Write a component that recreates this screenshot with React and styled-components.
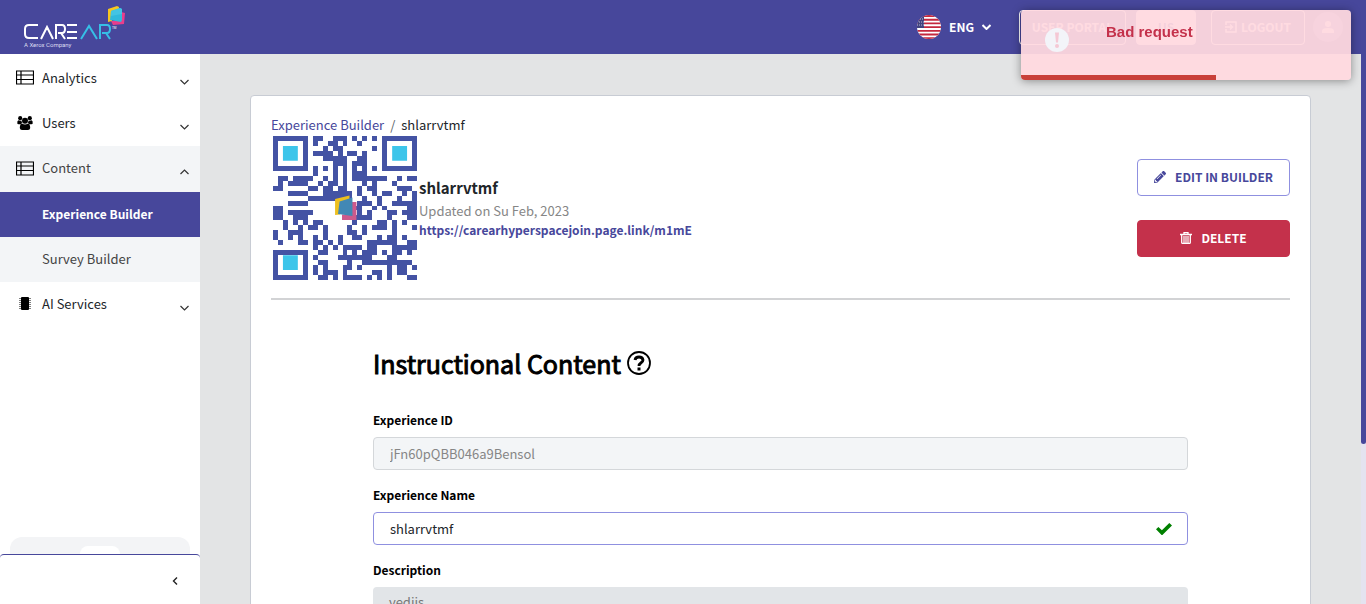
import React from 'react';
import styled, { createGlobalStyle, css } from 'styled-components';
import { FaPencilAlt } from 'react-icons/fa';

const GlobalStyle = createGlobalStyle`
  * { box-sizing: border-box; }
  html, body { margin: 0; height: 100%; }
  body {
    background: #e3e4e5;
    color: #000;
    font: 13px/20px "Noto Sans CJK SC", "Noto Sans", sans-serif;
    overflow: hidden;
  }
  #root { height: 100%; }
  button, input, textarea { font: inherit; }
`;

const INDIGO = '#47479b';

const strong = css`
  font-size: 12px;
  font-weight: 700;
`;

const Page = styled.div`
  display: grid;
  grid-template: 54px minmax(0, 1fr) / 200px minmax(0, 1fr) 5px;
  height: 100vh;
`;

const TopBar = styled.header`
  grid-column: 1 / 3;
  display: flex;
  align-items: center;
  justify-content: space-between;
  padding: 0 18px 0 23px;
  background: ${INDIGO};
  color: #fff;
`;

const TopActions = styled.div`
  display: flex;
  align-items: center;
`;

const Language = styled.button`
  display: flex;
  align-items: center;
  gap: 8px;
  margin-right: 28px;
  padding: 0;
  border: 0;
  background: none;
  color: #fff;
  ${strong}
`;

const OutlineButton = styled.button`
  display: flex;
  align-items: center;
  justify-content: center;
  gap: 4px;
  width: ${(p) => p.$width}px;
  height: 35px;
  margin-right: ${(p) => p.$after}px;
  padding: 0;
  border: 1px solid #fff;
  border-radius: 4px;
  background: ${(p) => (p.$filled ? '#fff' : 'transparent')};
  color: ${(p) => (p.$filled ? INDIGO : '#fff')};
  ${strong}
`;

const Avatar = styled.button`
  display: grid;
  place-items: center;
  width: 30px;
  height: 30px;
  padding: 0;
  border: 0;
  border-radius: 50%;
  background: #7c7cc0;
`;

const ScrollTrack = styled.div`
  grid-column: 3;
  grid-row: 1 / 3;
  background: #e4e3f0;
`;

const ScrollThumb = styled.div`
  height: 73.5%;
  background: ${INDIGO};
  border-radius: 0 0 3px 3px;
`;

const Sidebar = styled.aside`
  display: flex;
  flex-direction: column;
  justify-content: space-between;
  min-height: 0;
  background: #fff;
`;

const Menu = styled.nav`
  display: flex;
  flex-direction: column;
  padding-top: 2px;
`;

const rowBase = css`
  display: flex;
  align-items: center;
  border: 0;
  text-align: left;
  text-decoration: none;
`;

const MenuRow = styled.button`
  ${rowBase}
  height: ${(p) => (p.$open ? 46 : 45)}px;
  padding: 0 11px 2px 15px;
  background: ${(p) => (p.$open ? '#f3f5f7' : '#fff')};
  color: ${(p) => (p.$open ? '#444' : '#212529')};
`;

const MenuIcon = styled.span`
  display: flex;
  justify-content: center;
  width: 20px;
  margin-right: 7px;
  color: #000;
`;

const MenuText = styled.span`
  flex: 1;
`;

const Chevron = styled.svg`
  margin-top: 8px;
`;

const SubLink = styled.a`
  ${rowBase}
  height: 45px;
  padding: 0 0 2px 42px;
  background: ${(p) => (p.$active ? INDIGO : '#f3f5f7')};
  color: ${(p) => (p.$active ? '#fff' : '#444')};
  ${(p) => p.$active && strong}
`;

const PromoPeek = styled.div`
  display: flex;
  justify-content: center;
  align-items: flex-end;
  height: 17px;
  margin: 0 10px;
  border-radius: 12px 12px 0 0;
  background: #f3f4f6;
`;

const PromoBadge = styled.div`
  width: 40px;
  height: 8px;
  border-radius: 12px 12px 0 0;
  background: #fff;
`;

const Collapse = styled.button`
  display: flex;
  justify-content: flex-end;
  align-items: center;
  width: 100%;
  height: 50px;
  padding: 2px 22px 0 0;
  border: 0;
  border-top: 1px solid ${INDIGO};
  border-radius: 4px 4px 0 0;
  background: #fff;
`;

const Main = styled.main`
  min-height: 0;
  overflow: hidden;
  padding: 41px 50px 0;
`;

const Card = styled.section`
  min-height: 700px;
  padding: 19px 20px;
  border: 1px solid #c8ccd4;
  border-radius: 4px;
  background: #fff;
`;

const Breadcrumb = styled.nav`
  display: flex;
  gap: 6px;
  margin-bottom: 1px;
  color: #5a6268;
`;

const Crumb = styled.a`
  color: ${INDIGO};
  text-decoration: none;
`;

const Current = styled.span`
  color: #212529;
`;

const Summary = styled.div`
  display: flex;
  align-items: center;
  height: 164px;
  border-bottom: 2px solid #d2d3d5;
`;

const QrFrame = styled.div`
  align-self: flex-start;
  height: 148px;
  padding: 0 2px;
`;

const Details = styled.div`
  flex: 1;
  padding-bottom: 20px;
`;

const Name = styled.h2`
  margin: 0;
  color: #212529;
  font-size: 15px;
  font-weight: 700;
  line-height: 26px;
`;

const Updated = styled.p`
  margin: 0;
  color: #868686;
  line-height: 19px;
`;

const ShareLink = styled.a`
  display: block;
  color: ${INDIGO};
  line-height: 19px;
  text-decoration: none;
  ${strong}
`;

const Actions = styled.div`
  display: flex;
  flex-direction: column;
  gap: 24px;
  width: 153px;
  padding-bottom: 19px;
`;

const ActionButton = styled.button`
  display: flex;
  align-items: center;
  justify-content: center;
  gap: 9px;
  height: 37px;
  padding: 0;
  border: 1px solid ${(p) => (p.$danger ? '#c4314b' : '#8f90e0')};
  border-radius: 4px;
  background: ${(p) => (p.$danger ? '#c4314b' : '#fff')};
  color: ${(p) => (p.$danger ? '#fff' : INDIGO)};
  ${strong}
`;

const Form = styled.form`
  width: 80%;
  margin: 0 auto;
  padding-top: 43px;
`;

const Title = styled.h1`
  display: flex;
  align-items: center;
  gap: 6px;
  margin: 0 0 27px;
  font-size: 25px;
  font-weight: 400;
  line-height: 40px;
  -webkit-text-stroke: 1px currentColor;
`;

const Field = styled.div`
  display: flex;
  flex-direction: column;
  gap: 7px;
  margin-bottom: 15px;
`;

const Label = styled.label`
  ${strong}
`;

const InputBox = styled.div`
  display: flex;
  align-items: center;
  height: 33px;
  padding: 0 15px 0 0;
  border: 1px solid ${(p) => (p.$valid ? '#8f90e0' : '#d4d7da')};
  border-radius: 4px;
  background: ${(p) => (p.$valid ? '#fff' : '#f3f5f7')};
`;

const Input = styled.input`
  flex: 1;
  min-width: 0;
  padding: 0 16px;
  border: 0;
  outline: 0;
  background: transparent;
  color: ${(p) => (p.disabled ? '#868686' : '#212529')};
`;

const TextArea = styled.textarea`
  height: 90px;
  padding: 5px 16px;
  border: 0;
  border-radius: 4px;
  background: #e2e5e8;
  color: #777;
  resize: none;
`;

const Toast = styled.div`
  position: fixed;
  top: 10px;
  right: 15px;
  width: 330px;
  height: 70px;
  display: flex;
  flex-direction: column;
  justify-content: space-between;
  overflow: hidden;
  border-radius: 4px;
  background: rgba(255, 217, 223, 0.94);
  box-shadow: 0 1px 10px rgba(0, 0, 0, 0.4);
`;

const ToastBody = styled.div`
  display: flex;
  align-items: flex-start;
  gap: 37px;
  padding: 11px 24px 0;
  color: #c4314b;
  font: 700 15px/22px "Liberation Sans", Arial, sans-serif;
`;

const ToastIcon = styled.svg`
  margin-top: 7px;
`;

const Progress = styled.div`
  width: 195px;
  height: 5px;
  background: #c9403a;
`;

function Logo() {
  return (
    <svg width="104" height="46" viewBox="0 0 104 46" role="img" aria-label="CareAR, a Xerox Company">
      <path d="m85 5 9-3 2 1v2l-7 3v9l-4 1z" fill="#f7c51e" />
      <path d="m98 8 4 1-1 11-11 1-2-4 10-1z" fill="#e83e8c" />
      <path d="m88 7 9-3 2 1v11l-1 2-11-2z" fill="#30b9dc" />
      <path d="m88 7 9-3 2 1v5l-11 2z" fill="#43c4e3" />
      <g fill="none" stroke="#fff" strokeWidth="2">
        <path d="M15 21H6q-4 0-4 4v5q0 4 4 4h9M18 35l6-12 6 12M33 35V21h6q3 0 3 4t-3 4h-4m3 0 4 6M54 21H44M54 28H44M54 34H44" />
      </g>
      <g fill="none" stroke="#36bfe6" strokeWidth="2">
        <path d="m58 35 8-13 8 13M77 35V21h7q3 0 3 4t-3 4h-5m4 0 4 6" />
      </g>
      <text x="89" y="25" fontSize="3" fill="#fff" fontFamily="Roboto, sans-serif">TM</text>
      <text x="1" y="43" fontSize="6" fill="#dcdcf0" fontFamily="Roboto, sans-serif">A Xerox Company</text>
    </svg>
  );
}

function Flag() {
  return (
    <svg width="24" height="24" viewBox="0 0 24 24" aria-hidden="true">
      <clipPath id="flag"><circle cx="12" cy="12" r="12" /></clipPath>
      <g clipPath="url(#flag)">
        <rect width="24" height="24" fill="#fff" />
        <path d="M0 1h24M0 4.700h24M0 8.400h24M0 12.100h24M0 15.800h24M0 19.500h24M0 23.200h24" stroke="#c4283e" strokeWidth="1.850" />
        <rect width="7" height="13" fill="#41437f" />
        <path d="M1 4h6M0 7h7M0 10h7" stroke="#b9bad4" strokeWidth="1" strokeDasharray="1 1" />
      </g>
    </svg>
  );
}

function TableIcon() {
  return (
    <svg width="18" height="15" viewBox="0 0 18 15" fill="none" stroke="#000" aria-hidden="true">
      <path d="M.5 1h17v13H.5zM5 1v13M1 5h16M1 9.500h16" strokeWidth="1.200" />
    </svg>
  );
}

function UsersIcon() {
  return (
    <svg width="16" height="14" viewBox="0 0 16 14" aria-hidden="true">
      <circle cx="3.200" cy="2.200" r="2.100" />
      <circle cx="12.800" cy="2.200" r="2.100" />
      <circle cx="8" cy="4.800" r="3" />
      <path d="M.3 7.500Q0 4.500 1.500 4.300q1.500.8 3 .3 0 1.500.8 2.700-1 .1-1.500.9H1.500Q.5 8.200.3 7.500zM15.700 7.500q.3-3-1.200-3.200-1.500.8-3 .3 0 1.500-.8 2.700 1 .1 1.500.9h2.300q1 0 1.200-.7zM2.800 12q0-4.200 2.400-4.300 2.800 1.600 5.600 0 2.400.1 2.400 4.300-.2 2-2.200 2H5q-2 0-2.200-2z" />
    </svg>
  );
}

function ChipIcon() {
  return (
    <svg width="12" height="14" viewBox="0 0 12 14" aria-hidden="true">
      <rect x="2" width="8" height="13" rx="1" />
      <path d="M1 1v12M11 1v12" stroke="#000" strokeWidth="1" strokeDasharray="1 1" />
    </svg>
  );
}

function TrashIcon() {
  return (
    <svg width="12" height="12" viewBox="0 0 12 12" fill="none" stroke="currentColor" aria-hidden="true">
      <path d="M0 2.500h12M4 2V.7h4V2" strokeWidth="1.300" />
      <path d="M1.700 3v7.500q0 .9.900.9h6.800q.9 0 .9-.9V3" strokeWidth="1.300" />
      <path d="M4 4v7M6 4v7M8 4v7" strokeWidth="1.200" />
    </svg>
  );
}

function CheckIcon() {
  return (
    <svg width="16" height="12" viewBox="0 0 16 12" fill="green" aria-hidden="true">
      <path d="m0 6.300 2.400-2.400 3.500 3.400L13.300 0 16 2.500 6.400 12H5.600z" />
    </svg>
  );
}

function Arrow({ up }) {
  return (
    <Chevron width="9" height="6" viewBox="0 0 9 6" fill="none" stroke="#333" strokeWidth="1.200" aria-hidden="true">
      <path d={up ? 'M.5 5 4.500 1l4 4' : 'm.5 1 4 4 4-4'} />
    </Chevron>
  );
}

const QR_ROWS = [
  '#######.##..###.#.#.#.#######',
  '#.....#.#..##.#..#....#.....#',
  '#.....#...#.##......#.#.....#',
  '#.....#.####.#.##.#...#.....#',
  '#.....#...#####..##...#.....#',
  '#.....#.....###.###...#.....#',
  '#######.#.#.#.#.#.#.#.#######',
  '........#...#.#.###..........',
  '.##.####..#.#.#.#######..#.##',
  '.#.####..#.##.#...#.#...#....',
  '##.....##.##.##..#.##....###.',
  '...####...######.#..#.##..#.#',
  '.......#########..#..#...#..#',
  '...####.......#..###.#..#####',
  '##..............##..#.#....##',
  '##.#####.........#.#...##.###',
  '##..###.........####...#...##',
  '..#.#.#.##......#....##.#.#..',
  '..#..#.##.#....#..#.###.#...#',
  '#..###....#....##.#.....#....',
  '#..#.#..#.#..#..##...#.##.#..',
  '.#...##.##.#.#.....######..##',
  '........#.#.#.####.##...#####',
  '#######..##...#.#.###.#.##.#.',
  '#.....#.#....#######...##....',
  '#.....#..##....#..##########.',
  '#.....#.#.#...##.#.....#.##.#',
  '#.....#.#.###.#.....##.#.##..',
  '#######..##.#.####.#.#.#...##',
];

function QrCode() {
  const cells = QR_ROWS.flatMap((row, y) => [...row].map((c, x) => (c === '#' ? `M${x} ${y}h1v1h-1z` : ''))).join('');
  return (
    <svg width="144" height="144" viewBox="0 0 29 29" role="img" aria-label="Experience QR code">
      <path d={cells} fill="#4453a4" shapeRendering="crispEdges" />
      <path d="M2 2h3v3H2zM24 2h3v3h-3zM2 24h3v3H2z" fill="#3dc5ea" />
      <path d="m12.500 12.700 2.900-.7v1l-1.900.8v2l-1 .1z" fill="#edbf1f" />
      <path d="M15.700 13.300h1.100v3.600h-2.900v-1.100h1.800z" fill="#cd5a8c" />
      <path d="m13.400 13.200 2.600-.8v3.700l-2.900-.4z" fill="#4288b5" />
    </svg>
  );
}

export default function App() {
  return (
    <>
      <GlobalStyle />
      <Page>
        <TopBar>
          <Logo />
          <TopActions>
            <Language type="button">
              <Flag />
              ENG
              <svg width="9" height="6" viewBox="0 0 9 6" fill="none" stroke="#fff" strokeWidth="2" aria-hidden="true">
                <path d="m.5 1 4 4 4-4" />
              </svg>
            </Language>
            <OutlineButton type="button" $width={107} $after={10}>USER PORTAL</OutlineButton>
            <OutlineButton type="button" $width={60} $after={15} $filled>US</OutlineButton>
            <OutlineButton type="button" $width={94} $after={8}>
              <svg width="12" height="12" viewBox="0 0 12 12" fill="none" stroke="currentColor" strokeWidth="1.500" aria-hidden="true">
                <path d="M1 4V1h10v10H1V8M0 6h7M5 3.500 7.500 6 5 8.500" />
              </svg>
              LOGOUT
            </OutlineButton>
            <Avatar type="button" aria-label="Account">
              <svg width="12" height="12" viewBox="0 0 12 12" fill="#fff" aria-hidden="true">
                <circle cx="6" cy="3" r="3" />
                <path d="M0 12V10q0-3 6-3t6 3v2z" />
              </svg>
            </Avatar>
          </TopActions>
        </TopBar>
        <ScrollTrack><ScrollThumb /></ScrollTrack>

        <Sidebar>
          <Menu>
            <MenuRow type="button"><MenuIcon><TableIcon /></MenuIcon><MenuText>Analytics</MenuText><Arrow /></MenuRow>
            <MenuRow type="button"><MenuIcon><UsersIcon /></MenuIcon><MenuText>Users</MenuText><Arrow /></MenuRow>
            <MenuRow type="button" $open><MenuIcon><TableIcon /></MenuIcon><MenuText>Content</MenuText><Arrow up /></MenuRow>
            <SubLink href="#experience" $active>Experience Builder</SubLink>
            <SubLink href="#survey">Survey Builder</SubLink>
            <MenuRow type="button"><MenuIcon><ChipIcon /></MenuIcon><MenuText>AI Services</MenuText><Arrow /></MenuRow>
          </Menu>
          <div>
            <PromoPeek><PromoBadge /></PromoPeek>
            <Collapse type="button" aria-label="Collapse menu">
              <svg width="6" height="8" viewBox="0 0 6 8" fill="none" stroke="#222" strokeWidth="1.400" aria-hidden="true">
                <path d="M5 .5 1.500 4 5 7.500" />
              </svg>
            </Collapse>
          </div>
        </Sidebar>

        <Main>
          <Card>
            <Breadcrumb aria-label="Breadcrumb">
              <Crumb href="#experience">Experience Builder</Crumb>
              <span>/</span>
              <Current>shlarrvtmf</Current>
            </Breadcrumb>
            <Summary>
              <QrFrame><QrCode /></QrFrame>
              <Details>
                <Name>shlarrvtmf</Name>
                <Updated>Updated on Su Feb, 2023</Updated>
                <ShareLink href="#share">https://carearhyperspacejoin.page.link/m1mE</ShareLink>
              </Details>
              <Actions>
                <ActionButton type="button"><FaPencilAlt size={12} />EDIT IN BUILDER</ActionButton>
                <ActionButton type="button" $danger><TrashIcon />DELETE</ActionButton>
              </Actions>
            </Summary>

            <Form>
              <Title>
                Instructional Content
                <svg width="24" height="24" viewBox="0 0 24 24" fill="none" stroke="#000" aria-hidden="true">
                  <circle cx="12" cy="12" r="11" strokeWidth="1.800" />
                  <path d="M8 9q.5-3 4-3t4 3c0 3-4 2.500-4 6" strokeWidth="2.800" />
                  <path d="M12 16.500v3" strokeWidth="3" />
                </svg>
              </Title>
              <Field>
                <Label htmlFor="exp-id">Experience ID</Label>
                <InputBox><Input id="exp-id" defaultValue="jFn60pQBB046a9Bensol" disabled /></InputBox>
              </Field>
              <Field>
                <Label htmlFor="exp-name">Experience Name</Label>
                <InputBox $valid>
                  <Input id="exp-name" defaultValue="shlarrvtmf" />
                  <CheckIcon />
                </InputBox>
              </Field>
              <Field>
                <Label htmlFor="exp-desc">Description</Label>
                <TextArea id="exp-desc" defaultValue="vedjis" />
              </Field>
            </Form>
          </Card>
        </Main>
      </Page>

      <Toast role="alert">
        <ToastBody>
          <ToastIcon width="24" height="24" viewBox="0 0 24 24" aria-hidden="true">
            <circle cx="12" cy="12" r="12" fill="#f3f4f9" />
            <path d="M10 4.500h4l-1 10h-2z" fill="#f5c8d5" />
            <circle cx="12" cy="18" r="2" fill="#f5c8d5" />
          </ToastIcon>
          Bad request
        </ToastBody>
        <Progress />
      </Toast>
    </>
  );
}
